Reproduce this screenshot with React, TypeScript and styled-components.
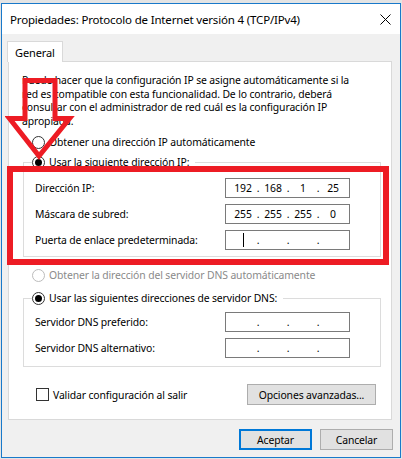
import React from 'react'
import styled, {createGlobalStyle} from 'styled-components'

const FONT = `"Noto Sans", "Segoe UI", sans-serif`
const RED = '#ed1c24'

const GlobalStyle = createGlobalStyle`
  html, body {
    margin: 0;
    padding: 0;
    background: #e4e4e4;
  }
  body {
    font-family: ${FONT};
    font-size: 10.4px;
    letter-spacing: -0.12px;
    color: #000;
  }
  * {
    box-sizing: border-box;
  }
`

const Page = styled.div`
  padding: 3px 0 0 1px;
`

const Window = styled.div`
  width: 400px;
  height: 455px;
  border: 1px solid #1979ca;
  background: #f0f0f0;
  display: flex;
  flex-direction: column;
`

const TitleBar = styled.div`
  height: 30px;
  flex-shrink: 0;
  background: #fff;
  display: flex;
  align-items: center;
  justify-content: space-between;
  padding: 0 9px 0 8px;
`

const Title = styled.span`
  font-size: 11.5px;
  letter-spacing: -0.17px;
  white-space: nowrap;
`

const Body = styled.div`
  flex: 1;
  display: flex;
  flex-direction: column;
  padding: 7px 8px 7px 6px;
`

const TabBar = styled.div`
  display: flex;
  height: 20px;
`

const Tab = styled.div`
  position: relative;
  z-index: 1;
  height: 21px;
  margin-left: -1px;
  padding: 0 7px;
  background: #fff;
  border: 1px solid #d9d9d9;
  border-bottom: none;
  display: flex;
  align-items: center;
  font-size: 11px;
`

const Panel = styled.div`
  position: relative;
  height: 359px;
  background: #fff;
  border: 1px solid #d9d9d9;
  padding-top: 12px;
  display: flex;
  flex-direction: column;
`

const Intro = styled.p`
  margin: 0 0 0 13px;
  line-height: 13.5px;
  white-space: nowrap;
`

const OptionRow = styled.label<{$indent?: number; $top?: number; $disabled?: boolean}>`
  display: flex;
  align-items: center;
  gap: 4px;
  height: 16px;
  margin-left: ${p => p.$indent ?? 0}px;
  margin-top: ${p => p.$top ?? 0}px;
  color: ${p => (p.$disabled ? '#8a8a8a' : '#000')};
  white-space: nowrap;
`

const RadioCircle = styled.span<{$checked?: boolean; $disabled?: boolean}>`
  width: 13px;
  height: 13px;
  flex-shrink: 0;
  border-radius: 50%;
  border: 1px solid ${p => (p.$disabled ? '#bcbcbc' : '#333')};
  background: #fff;
  display: flex;
  align-items: center;
  justify-content: center;

  &::after {
    content: '';
    display: ${p => (p.$checked ? 'block' : 'none')};
    width: 7px;
    height: 7px;
    border-radius: 50%;
    background: #000;
  }
`

const CheckBox = styled.span`
  width: 13px;
  height: 13px;
  flex-shrink: 0;
  border: 1px solid #333;
  background: #fff;
`

const GroupBox = styled.fieldset<{$top: number; $padTop: number; $padBottom: number}>`
  margin: ${p => p.$top}px 10px 0 14px;
  padding: ${p => p.$padTop}px 30px ${p => p.$padBottom}px 8px;
  border: 1px solid #dcdcdc;
  min-inline-size: 0;
  display: flex;
  flex-direction: column;
  gap: 6px;
`

const Legend = styled.legend`
  padding: 0 6px 0 0;
`

const FieldRow = styled.div`
  display: flex;
  align-items: center;
  justify-content: space-between;
  height: 20px;
  padding-left: 3px;
  white-space: nowrap;
`

const IpBox = styled.div`
  width: 125px;
  height: 20px;
  border: 1px solid #7a7a7a;
  background: #fff;
  display: flex;
  align-items: center;
  padding-left: 5px;
`

const Octet = styled.span`
  width: 24px;
  display: flex;
  justify-content: center;
  align-items: center;
`

const Dot = styled.span`
  width: 6px;
  text-align: center;
`

const Caret = styled.span`
  width: 1px;
  height: 14px;
  background: #000;
`

const BottomRow = styled.div`
  display: flex;
  align-items: center;
  height: 21px;
  margin-top: 17px;
  padding: 0 15px 0 27px;
`

const Button = styled.button<{$primary?: boolean}>`
  font-family: ${FONT};
  font-size: 10.4px;
  letter-spacing: -0.12px;
  color: #000;
  height: 21px;
  padding: 0;
  background: #e1e1e1;
  border: ${p => (p.$primary ? '2px solid #0078d7' : '1px solid #adadad')};
`

const AdvancedButton = styled(Button)`
  width: 129px;
  margin-left: auto;
`

const DialogButtons = styled.div`
  display: flex;
  justify-content: flex-end;
  gap: 8px;
  margin: 9px -1px 0 0;
`

const DialogButton = styled(Button)`
  width: 73px;
`

const Highlight = styled.div`
  position: absolute;
  left: -2px;
  top: 104px;
  width: 382px;
  height: 99px;
  border: 6px solid ${RED};
  pointer-events: none;
`

const Arrow = styled.svg`
  position: absolute;
  left: -4px;
  top: 10px;
  pointer-events: none;
`

const Radio = ({label, checked, disabled}: {label: string; checked?: boolean; disabled?: boolean}) => (
  <>
    <RadioCircle $checked={checked} $disabled={disabled}/>
    <span>{label}</span>
  </>
)

const IpField = ({octets, caret}: {octets?: string[]; caret?: boolean}) => {
  const values = octets ?? ['', '', '', '']
  return (
    <IpBox>
      {values.map((v, i) => (
        <React.Fragment key={i}>
          {i > 0 && <Dot>.</Dot>}
          <Octet>{i === 0 && caret ? <Caret/> : v}</Octet>
        </React.Fragment>
      ))}
    </IpBox>
  )
}

export default function App() {
  return (
    <Page>
      <GlobalStyle/>
      <Window>
        <TitleBar>
          <Title>Propiedades: Protocolo de Internet versión 4 (TCP/IPv4)</Title>
          <svg width="11" height="11" viewBox="0 0 11 11">
            <path d="M0.5 0.5 L10.5 10.5 M10.5 0.5 L0.5 10.5" stroke="#000" strokeWidth="1"/>
          </svg>
        </TitleBar>
        <Body>
          <TabBar>
            <Tab>General</Tab>
          </TabBar>
          <Panel>
            <Intro>
              Puede hacer que la configuración IP se asigne automáticamente si la<br/>
              red es compatible con esta funcionalidad. De lo contrario, deberá<br/>
              consultar con el administrador de red cuál es la configuración IP<br/>
              apropiada.
            </Intro>
            <OptionRow $indent={23} $top={6}>
              <Radio label="Obtener una dirección IP automáticamente"/>
            </OptionRow>
            <GroupBox $top={4} $padTop={8} $padBottom={6}>
              <Legend>
                <OptionRow>
                  <Radio label="Usar la siguiente dirección IP:" checked/>
                </OptionRow>
              </Legend>
              <FieldRow>
                <span>Dirección IP:</span>
                <IpField octets={['192', '168', '1', '25']}/>
              </FieldRow>
              <FieldRow>
                <span>Máscara de subred:</span>
                <IpField octets={['255', '255', '255', '0']}/>
              </FieldRow>
              <FieldRow>
                <span>Puerta de enlace predeterminada:</span>
                <IpField caret/>
              </FieldRow>
            </GroupBox>
            <OptionRow $indent={23} $top={10} $disabled>
              <Radio label="Obtener la dirección del servidor DNS automáticamente" disabled/>
            </OptionRow>
            <GroupBox $top={7} $padTop={6} $padBottom={8}>
              <Legend>
                <OptionRow>
                  <Radio label="Usar las siguientes direcciones de servidor DNS:" checked/>
                </OptionRow>
              </Legend>
              <FieldRow>
                <span>Servidor DNS preferido:</span>
                <IpField/>
              </FieldRow>
              <FieldRow>
                <span>Servidor DNS alternativo:</span>
                <IpField/>
              </FieldRow>
            </GroupBox>
            <BottomRow>
              <OptionRow>
                <CheckBox/>
                <span>Validar configuración al salir</span>
              </OptionRow>
              <AdvancedButton>Opciones avanzadas...</AdvancedButton>
            </BottomRow>

            <Highlight/>
            <Arrow width="70" height="95" viewBox="0 0 70 95">
              <polygon
                points="20,8.5 50,8.5 50,46.5 64.5,46.5 34,84 4.5,46.5 20,46.5"
                fill="none"
                stroke={RED}
                strokeWidth="5"
              />
            </Arrow>
          </Panel>
          <DialogButtons>
            <DialogButton $primary>Aceptar</DialogButton>
            <DialogButton>Cancelar</DialogButton>
          </DialogButtons>
        </Body>
      </Window>
    </Page>
  )
}
